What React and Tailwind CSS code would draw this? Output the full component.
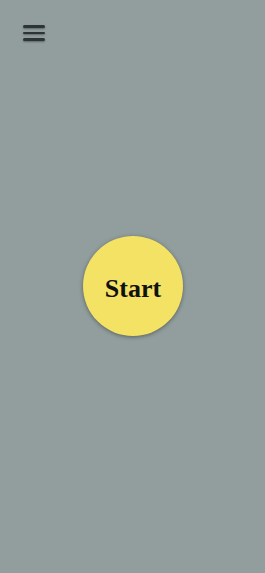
export default function App() {
  return (
    <div className="relative flex h-[573px] w-full flex-col bg-[#929e9e]">
      {/* menu button */}
      <div className="flex h-[68px] items-start px-[23px] pt-[25px]">
        <button className="flex w-[22px] flex-col gap-[4px]">
          <span className="h-[2.5px] w-full rounded-sm bg-[#2e3436] shadow-[0_1px_2px_rgba(0,0,0,0.35)]" />
          <span className="h-[2.5px] w-full rounded-sm bg-[#2e3436] shadow-[0_1px_2px_rgba(0,0,0,0.35)]" />
          <span className="h-[2.5px] w-full rounded-sm bg-[#2e3436] shadow-[0_1px_2px_rgba(0,0,0,0.35)]" />
        </button>
      </div>

      <div className="flex flex-1 items-start justify-center pt-[168px] pl-px">
        <button className="flex h-[100px] w-[100px] items-center justify-center rounded-full bg-[#f3e264] shadow-[0_1px_4px_rgba(0,0,0,0.4)]">
          <span className="pt-[5px] font-['Liberation_Serif',serif] text-[26px] font-bold text-[#111]">
            Start
          </span>
        </button>
      </div>
    </div>
  );
}
